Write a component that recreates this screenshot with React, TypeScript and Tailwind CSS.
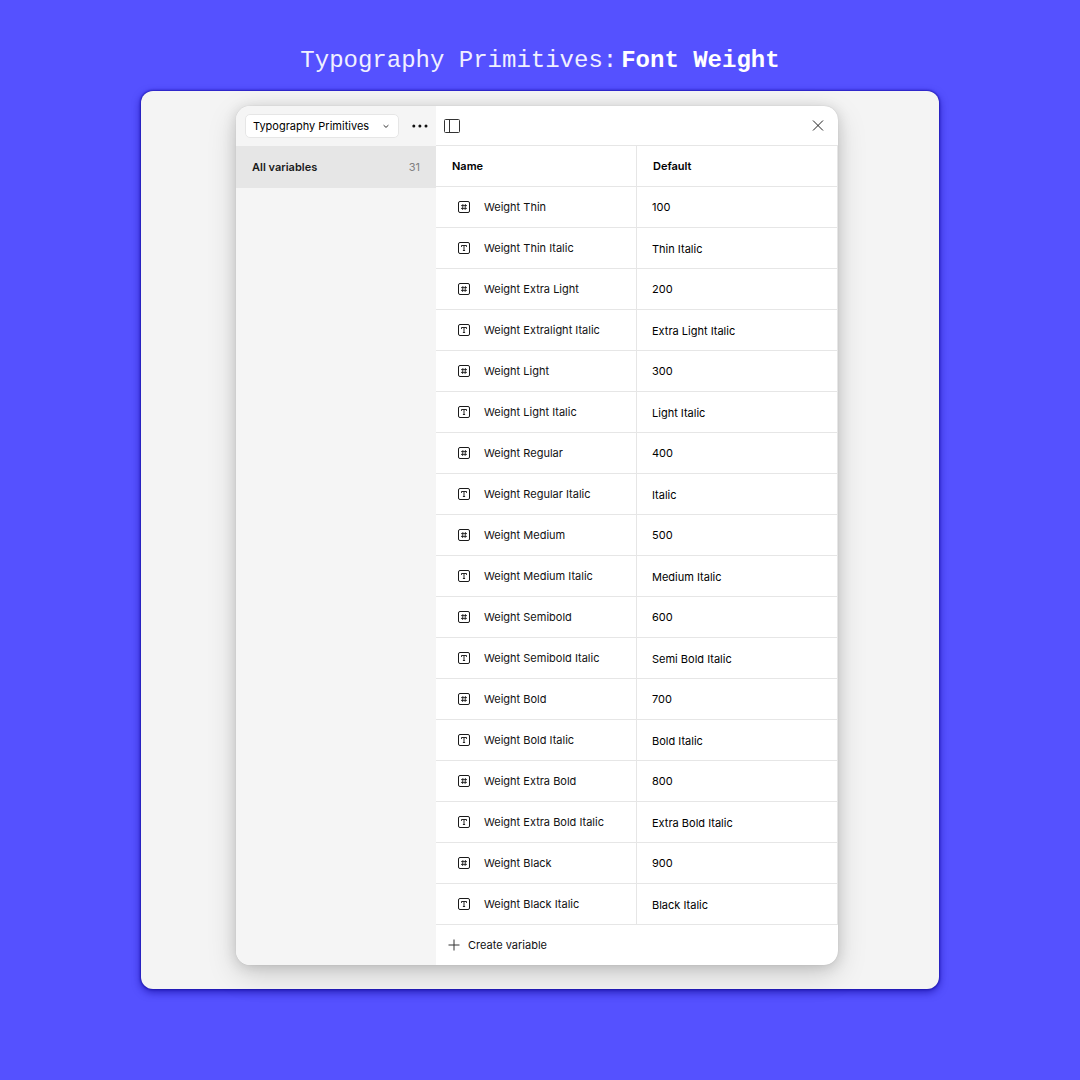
type Kind = "number" | "string";

const variables: { kind: Kind; name: string; value: string }[] = [
  { kind: "number", name: "Weight Thin", value: "100" },
  { kind: "string", name: "Weight Thin Italic", value: "Thin Italic" },
  { kind: "number", name: "Weight Extra Light", value: "200" },
  { kind: "string", name: "Weight Extralight Italic", value: "Extra Light Italic" },
  { kind: "number", name: "Weight Light", value: "300" },
  { kind: "string", name: "Weight Light Italic", value: "Light Italic" },
  { kind: "number", name: "Weight Regular", value: "400" },
  { kind: "string", name: "Weight Regular Italic", value: "Italic" },
  { kind: "number", name: "Weight Medium", value: "500" },
  { kind: "string", name: "Weight Medium Italic", value: "Medium Italic" },
  { kind: "number", name: "Weight Semibold", value: "600" },
  { kind: "string", name: "Weight Semibold Italic", value: "Semi Bold Italic" },
  { kind: "number", name: "Weight Bold", value: "700" },
  { kind: "string", name: "Weight Bold Italic", value: "Bold Italic" },
  { kind: "number", name: "Weight Extra Bold", value: "800" },
  { kind: "string", name: "Weight Extra Bold Italic", value: "Extra Bold Italic" },
  { kind: "number", name: "Weight Black", value: "900" },
  { kind: "string", name: "Weight Black Italic", value: "Black Italic" },
];

function KindIcon({ kind }: { kind: Kind }) {
  return (
    <svg className="size-3 shrink-0" viewBox="0 0 12 12" fill="none" stroke="#1a1a1a" aria-hidden="true">
      <rect x="0.5" y="0.5" width="11" height="11" rx="1.5" />
      {kind === "number" ? (
        <path d="M4.9 3.1 4.6 8.9M7.4 3.1 7.1 8.9M3.1 4.6h5.9M3 7.4h5.9" strokeWidth="0.9" />
      ) : (
        <path d="M3.5 4.9V3.5h5v1.4M6 3.5v5M4.9 8.5h2.2" strokeWidth="0.95" />
      )}
    </svg>
  );
}

function Sidebar() {
  return (
    <aside className="w-[200px] shrink-0 bg-[#f5f5f5]">
      <div className="flex h-10 items-center pl-[9px]">
        <div className="flex w-[154px] items-center">
          <select
            aria-label="Collection"
            className="h-6 w-full appearance-none rounded-[5px] border border-[#e6e6e6] bg-white pl-[7px] pr-6 text-[11px] leading-4 text-black"
          >
            <option>Typography Primitives</option>
          </select>
          <svg
            className="pointer-events-none -ml-[17px] mr-[9px] size-2 shrink-0"
            viewBox="0 0 8 8"
            fill="none"
            stroke="#333"
            aria-hidden="true"
          >
            <path d="M1.6 3.2 4 5.4 6.4 3.2" />
          </svg>
        </div>
        <button type="button" aria-label="More options" className="ml-[13px] flex h-6 w-4 items-center justify-center">
          <svg className="size-4" viewBox="0 0 16 16" fill="#111" aria-hidden="true">
            <circle cx="1.8" cy="8" r="1.5" />
            <circle cx="7.9" cy="8" r="1.5" />
            <circle cx="14" cy="8" r="1.5" />
          </svg>
        </button>
      </div>
      <button
        type="button"
        className="flex h-[42px] w-full items-center justify-between bg-[#e6e6e6] px-4 text-[11px] font-semibold text-[#1a1a1a]"
      >
        <span>All variables</span>
        <span className="font-normal text-[#808080]">31</span>
      </button>
    </aside>
  );
}

function VariablesTable() {
  return (
    <table className="w-full table-fixed border-separate border-spacing-0 text-left text-[11px] leading-4 text-[#111]">
      <thead>
        <tr className="h-[41px]">
          <th scope="col" className="border-b border-r border-[#e6e6e6] p-0 pl-4 font-semibold text-black">
            Name
          </th>
          <th scope="col" className="border-b border-r border-[#e6e6e6] p-0 pl-4 font-semibold text-black">
            Default
          </th>
        </tr>
      </thead>
      <tbody>
        {variables.map((v) => (
          <tr key={v.name} className="h-[41px]">
            <td className="border-b border-r border-[#e6e6e6] p-0">
              <div className="flex items-center gap-[14px] pl-[22px]">
                <KindIcon kind={v.kind} />
                <span>{v.name}</span>
              </div>
            </td>
            <td
              className={
                v.kind === "string"
                  ? "border-b border-r border-[#e6e6e6] p-0 pl-[15px] pt-0.5 text-black"
                  : "border-b border-r border-[#e6e6e6] p-0 pl-[15px] text-black"
              }
            >
              {v.value}
            </td>
          </tr>
        ))}
      </tbody>
    </table>
  );
}

export default function App() {
  return (
    <div className="flex min-h-screen flex-col items-center bg-[#5551ff] px-4 pb-[91px] pt-[43px] font-['Inter',sans-serif]">
      <h1 className="flex gap-1 font-['Liberation_Mono',monospace] text-2xl leading-9 text-white">
        <span className="text-[#f0f0ff]">Typography Primitives:</span>
        <span className="font-bold">Font Weight</span>
      </h1>
      <main className="mt-3 w-full max-w-[798px] rounded-xl bg-[#f4f4f4] pb-6 pl-[95px] pr-[101px] pt-[15px] shadow-[0_3px_8px_rgba(20,12,160,0.75),0_0_2px_1px_#2a22c4]">
        <div className="flex overflow-hidden rounded-[14px] bg-white shadow-[0_10px_30px_rgba(0,0,0,0.15),0_2px_14px_rgba(0,0,0,0.15),0_0_1px_rgba(0,0,0,0.2)]">
          <Sidebar />
          <section className="min-w-0 flex-1">
            <div className="flex h-10 items-center justify-between border-b border-[#e6e6e6] px-2">
              <button type="button" aria-label="Toggle sidebar">
                <svg className="size-4" viewBox="0 0 16 16" fill="none" stroke="#333" aria-hidden="true">
                  <rect x="0.5" y="1.5" width="15" height="13" rx="1" />
                  <path d="M5.5 1.5v13" />
                </svg>
              </button>
              <button type="button" aria-label="Close" className="p-1">
                <svg className="size-4" viewBox="0 0 16 16" fill="none" stroke="#222" aria-hidden="true">
                  <path d="M3 2.5l10 10M13 2.5l-10 10" />
                </svg>
              </button>
            </div>
            <VariablesTable />
            <button type="button" className="flex h-10 w-full items-center gap-2 pl-3 text-[11px] text-[#111]">
              <svg className="size-3" viewBox="0 0 12 12" fill="none" stroke="#333" aria-hidden="true">
                <path d="M6 0.5v11M0.5 6h11" />
              </svg>
              Create variable
            </button>
          </section>
        </div>
      </main>
    </div>
  );
}
